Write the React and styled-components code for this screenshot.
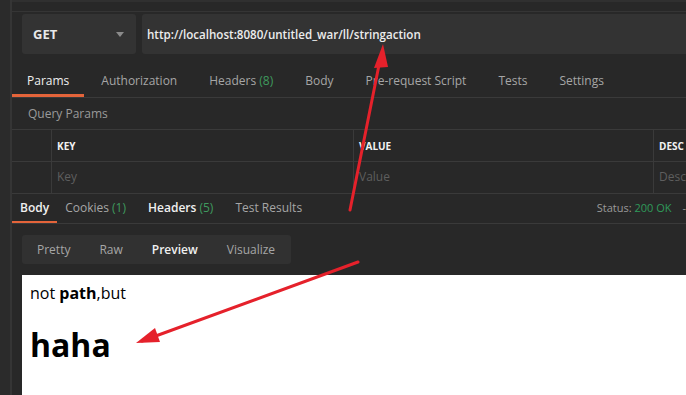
import React from 'react';
import styled, { createGlobalStyle } from 'styled-components';

const GlobalStyle = createGlobalStyle`
  html, body {
    margin: 0;
    padding: 0;
    background: #282828;
  }
  body {
    font-family: "Open Sans", "Noto Sans", sans-serif;
  }
`;

const requestTabs = [
  { label: 'Params', active: true },
  { label: 'Authorization' },
  { label: 'Headers', count: 8 },
  { label: 'Body' },
  { label: 'Pre-request Script' },
  { label: 'Tests' },
  { label: 'Settings' },
];

const responseTabs = [
  { label: 'Body', active: true },
  { label: 'Cookies', count: 1 },
  { label: 'Headers', count: 5, strong: true },
  { label: 'Test Results' },
];

const views = ['Pretty', 'Raw', 'Preview', 'Visualize'];

const App = () => {
  return (
    <Screen>
      <GlobalStyle />
      <SideEdge />
      <Main>
        <TopStrip />
        <UrlRow>
          <MethodBox>
            <span>GET</span>
            <Caret />
          </MethodBox>
          <UrlInput>http://localhost:8080/untitled_war/ll/stringaction</UrlInput>
        </UrlRow>

        <RequestTabs>
          {requestTabs.map((t) => (
            <RequestTab key={t.label} $active={t.active}>
              {t.label}
              {t.count && <Count> ({t.count})</Count>}
            </RequestTab>
          ))}
        </RequestTabs>

        <SectionTitle>Query Params</SectionTitle>
        <Table>
          <HeadCell />
          <HeadCell $bold>KEY</HeadCell>
          <HeadCell $bold>VALUE</HeadCell>
          <HeadCell $bold>DESC</HeadCell>
          <Cell />
          <Cell>Key</Cell>
          <Cell>Value</Cell>
          <Cell>Desc</Cell>
        </Table>

        <ResponseBar>
          <ResponseTabs>
            {responseTabs.map((t) => (
              <ResponseTab key={t.label} $active={t.active} $strong={t.strong}>
                {t.label}
                {t.count && <Count> ({t.count})</Count>}
              </ResponseTab>
            ))}
          </ResponseTabs>
          <Status>
            Status: <StatusValue>200 OK</StatusValue>
            <Dash>-</Dash>
          </Status>
        </ResponseBar>

        <ResponseBody>
          <Segmented>
            {views.map((v) => (
              <Segment key={v} $active={v === 'Preview'}>
                {v}
              </Segment>
            ))}
          </Segmented>
          <Preview>
            <PreviewText>
              not <b>path</b>,but
            </PreviewText>
            <PreviewHeading>haha</PreviewHeading>
          </Preview>
        </ResponseBody>
      </Main>

      <Arrows width="686" height="395" viewBox="0 0 686 395">
        <g stroke="#e5212b" strokeWidth="3" strokeLinecap="round" fill="none">
          <line x1="350" y1="210" x2="380" y2="60" />
          <line x1="358" y1="262" x2="142" y2="341" />
        </g>
        <g fill="#e5212b">
          <polygon points="383,44 374,68 388,67" />
          <polygon points="136,343 155,328 160,342" />
        </g>
      </Arrows>
    </Screen>
  );
};

const Screen = styled.div`
  position: relative;
  width: 686px;
  height: 395px;
  overflow: hidden;
  display: flex;
  background: #282828;
  color: #e6e6e6;
`;

const SideEdge = styled.div`
  width: 10px;
  flex-shrink: 0;
  background: #2b2b2b;
  border-right: 2px solid #353535;
`;

const Main = styled.div`
  flex: 1;
  min-width: 0;
  display: flex;
  flex-direction: column;
`;

const TopStrip = styled.div`
  height: 9px;
  border-top: 2px solid #303030;
  border-bottom: 1px solid #353535;
`;

const UrlRow = styled.div`
  display: flex;
  gap: 6px;
  height: 40px;
  padding: 2px 0 0 10px;
`;

const MethodBox = styled.div`
  width: 114px;
  box-sizing: border-box;
  display: flex;
  align-items: center;
  justify-content: space-between;
  padding: 0 12px 0 11px;
  background: #333333;
  border-radius: 3px;
  font-size: 13px;
  font-weight: 700;
  color: #e8e8e8;
`;

const Caret = styled.span`
  width: 0;
  height: 0;
  border-left: 4px solid transparent;
  border-right: 4px solid transparent;
  border-top: 5px solid #8a8a8a;
`;

const UrlInput = styled.div`
  flex: 1;
  display: flex;
  align-items: center;
  padding-left: 5px;
  background: #333333;
  border-radius: 3px 0 0 3px;
  font-size: 11.6px;
  font-weight: 600;
  color: #ececec;
  white-space: nowrap;
`;

const RequestTabs = styled.div`
  display: flex;
  box-sizing: border-box;
  height: 44px;
  padding-top: 9px;
  border-bottom: 1px solid #3a3a3a;
  white-space: nowrap;
`;

const RequestTab = styled.div`
  display: flex;
  align-items: center;
  padding: 0 15px;
  margin-right: 2px;
  font-size: 12px;
  color: ${(p) => (p.$active ? '#f0f0f0' : '#a6a6a6')};
  box-shadow: ${(p) => (p.$active ? 'inset 0 -3px 0 #e4643a' : 'none')};
  white-space: pre;
`;

const Count = styled.span`
  color: #3f9a5e;
  font-weight: 400;
`;

const SectionTitle = styled.div`
  height: 31px;
  display: flex;
  align-items: center;
  padding-left: 16px;
  font-size: 12px;
  color: #9a9a9a;
`;

const Table = styled.div`
  display: grid;
  grid-template-columns: 40px 302px 300px 200px;
  grid-auto-rows: 32px;
  border-top: 1px solid #3a3a3a;
`;

const HeadCell = styled.div`
  display: flex;
  align-items: center;
  padding-left: 5px;
  border-right: 1px solid #3a3a3a;
  border-bottom: 1px solid #3a3a3a;
  font-size: 10px;
  font-weight: ${(p) => (p.$bold ? 700 : 400)};
  color: #f2f2f2;
  white-space: nowrap;
  overflow: hidden;
`;

const Cell = styled(HeadCell)`
  padding-bottom: 3px;
  font-size: 12px;
  font-weight: 400;
  color: #5e5e5e;
`;

const ResponseBar = styled.div`
  display: flex;
  justify-content: space-between;
  box-sizing: border-box;
  height: 31px;
  padding-bottom: 2px;
  border-bottom: 1px solid #3a3a3a;
  margin-top: -1px;
`;

const ResponseTabs = styled.div`
  display: flex;
`;

const ResponseTab = styled.div`
  display: flex;
  align-items: center;
  padding: 0 8px;
  margin-right: ${(p) => (p.$active ? '0' : '6px')};
  margin-bottom: -2px;
  padding-bottom: 2px;
  font-size: 12px;
  font-weight: ${(p) => (p.$active || p.$strong ? 600 : 400)};
  color: ${(p) => (p.$active || p.$strong ? '#f0f0f0' : '#a6a6a6')};
  box-shadow: ${(p) => (p.$active ? 'inset 0 -2px 0 #e4643a' : 'none')};
  white-space: pre;
`;

const Status = styled.div`
  display: flex;
  align-items: center;
  font-size: 11px;
  color: #9a9a9a;
  white-space: pre;
`;

const StatusValue = styled.span`
  color: #2f9a5a;
`;

const Dash = styled.span`
  margin-left: 11px;
  color: #9a9a9a;
`;

const ResponseBody = styled.div`
  flex: 1;
  display: flex;
  flex-direction: column;
  gap: 11px;
  padding: 11px 0 0 10px;
`;

const Segmented = styled.div`
  display: flex;
  align-self: flex-start;
  height: 29px;
  width: 269px;
  box-sizing: border-box;
  padding-left: 15px;
  background: #313131;
  border-radius: 3px;
`;

const Segment = styled.div`
  display: flex;
  align-items: center;
  margin-right: 29px;
  font-size: 12px;
  font-weight: ${(p) => (p.$active ? 600 : 400)};
  color: ${(p) => (p.$active ? '#f0f0f0' : '#a6a6a6')};
`;

const Preview = styled.div`
  flex: 1;
  background: #ffffff;
  padding: 7px 8px 0;
  color: #000;
  font-family: "Open Sans", "Noto Sans", sans-serif;
`;

const PreviewText = styled.p`
  margin: 0;
  font-size: 16px;
  line-height: 22px;

  b {
    font-weight: 700;
  }
`;

const PreviewHeading = styled.h1`
  margin: 21px 0 0;
  font-size: 32px;
  font-weight: 700;
  line-height: 40px;
`;

const Arrows = styled.svg`
  position: absolute;
  left: 0;
  top: 0;
  pointer-events: none;
`;

export default App;
